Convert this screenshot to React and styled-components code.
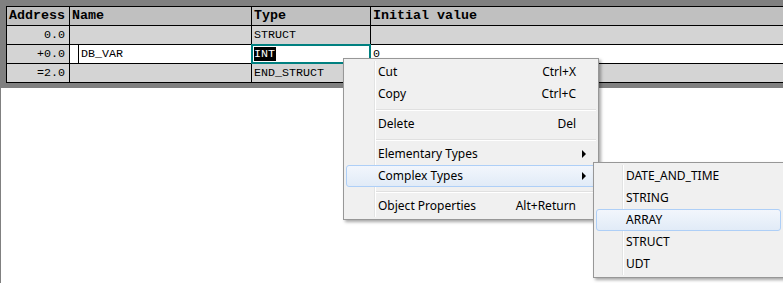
import React from 'react';
import styled, { createGlobalStyle } from 'styled-components';

const GlobalStyle = createGlobalStyle`
  html, body {
    margin: 0;
    padding: 0;
    background: #ffffff;
  }
`;

const Screen = styled.div`
  position: relative;
  width: 783px;
  height: 283px;
  overflow: hidden;
  background: #ffffff;
  border-left: 1px solid #808080;
  box-sizing: border-box;
`;

const TableArea = styled.div`
  background: #808080;
  padding: 6px 0 5px 5px;
`;

const Table = styled.div`
  display: grid;
  grid-template-columns: 62px 181px 118px 1fr;
  grid-auto-rows: 18px;
  gap: 1px;
  background: #000000;
  border: 1px solid #000000;
  border-right: none;
  font-family: 'Liberation Mono', monospace;
  font-size: 11.67px;
  color: #000000;
`;

const Cell = styled.div`
  position: relative;
  display: flex;
  align-items: center;
  padding: ${p => (p.$right ? '0 4px 0 0' : '0 0 0 2px')};
  justify-content: ${p => (p.$right ? 'flex-end' : 'flex-start')};
  background: ${p => p.$bg || '#d4d4d4'};
  white-space: nowrap;
  line-height: 18px;
`;

const HeadCell = styled(Cell)`
  background: #c0c0c0;
  font-weight: bold;
  font-size: 13.33px;
`;

const NameCell = styled(Cell)`
  padding: 0;
  background: #ffffff;
`;

const NameGap = styled.div`
  width: 8px;
  height: 100%;
  border-right: 1px solid #000000;
  margin-right: 2px;
`;

const EditCell = styled(Cell)`
  background: #ffffff;
  outline: 2px solid #008080;
  outline-offset: -1px;
  z-index: 1;
`;

const Selected = styled.span`
  background: #000000;
  color: #ffffff;
  padding-right: 1px;
  line-height: 14px;
`;

const Menu = styled.div`
  position: absolute;
  left: ${p => p.$x}px;
  top: ${p => p.$y}px;
  width: ${p => p.$w}px;
  box-sizing: border-box;
  padding: 2px;
  background: #f0f0f0;
  border: 1px solid #979797;
  box-shadow: 2px 2px 3px rgba(0, 0, 0, 0.35);
  font-family: 'Noto Sans', 'Liberation Sans', sans-serif;
  font-size: 12px;
  color: #000000;
  z-index: ${p => p.$z || 5};

  &::before {
    content: '';
    position: absolute;
    top: 2px;
    bottom: 2px;
    left: ${p => p.$gutter}px;
    width: 1px;
    background: #e2e3e3;
    box-shadow: 1px 0 0 #ffffff;
  }
`;

const Item = styled.div`
  position: relative;
  display: flex;
  align-items: center;
  height: 22px;
  box-sizing: border-box;
  padding: 0 ${p => p.$padRight || 19}px 0 ${p => p.$indent}px;
  border: 1px solid transparent;
  border-radius: 3px;
  line-height: 20px;
  ${p =>
    p.$active &&
    `
    border-color: #aecff7;
    background: linear-gradient(#f2f6fc, #e1ebf7);
  `}
`;

const Label = styled.span`
  flex: 1;
`;

const Shortcut = styled.span`
  text-align: right;
`;

const Arrow = styled.span`
  position: absolute;
  right: 9px;
  top: 6px;
  width: 0;
  height: 0;
  border-top: 4px solid transparent;
  border-bottom: 4px solid transparent;
  border-left: 4px solid #000000;
`;

const Separator = styled.div`
  height: 8px;
  margin-left: 29px;
  display: flex;
  align-items: center;

  &::after {
    content: '';
    flex: 1;
    height: 1px;
    background: #e0e0e0;
    box-shadow: 0 1px 0 #ffffff;
  }
`;

const mainItems = [
  { label: 'Cut', key: 'Ctrl+X' },
  { label: 'Copy', key: 'Ctrl+C' },
  { sep: true },
  { label: 'Delete', key: 'Del' },
  { sep: true },
  { label: 'Elementary Types', sub: true },
  { label: 'Complex Types', sub: true, active: true },
  { sep: true },
  { label: 'Object Properties', key: 'Alt+Return' },
];

const subItems = ['DATE_AND_TIME', 'STRING', 'ARRAY', 'STRUCT', 'UDT'];

export default function App() {
  return (
    <Screen>
      <GlobalStyle />
      <TableArea>
        <Table>
          <HeadCell>Address</HeadCell>
          <HeadCell>Name</HeadCell>
          <HeadCell>Type</HeadCell>
          <HeadCell>Initial value</HeadCell>

          <Cell $right>0.0</Cell>
          <Cell />
          <Cell>STRUCT</Cell>
          <Cell />

          <Cell $right>+0.0</Cell>
          <NameCell>
            <NameGap />
            DB_VAR
          </NameCell>
          <EditCell>
            <Selected>INT</Selected>
          </EditCell>
          <Cell $bg="#ffffff">0</Cell>

          <Cell $right>=2.0</Cell>
          <Cell />
          <Cell>END_STRUCT</Cell>
          <Cell />
        </Table>
      </TableArea>

      <Menu $x={342} $y={58} $w={256} $gutter={30}>
        {mainItems.map((it, i) =>
          it.sep ? (
            <Separator key={i} />
          ) : (
            <Item key={i} $indent={31} $active={it.active}>
              <Label>{it.label}</Label>
              {it.key && <Shortcut>{it.key}</Shortcut>}
              {it.sub && <Arrow />}
            </Item>
          )
        )}
      </Menu>

      <Menu $x={592} $y={162} $w={191} $gutter={28} $z={6}>
        {subItems.map(s => (
          <Item key={s} $indent={29} $active={s === 'ARRAY'} $padRight={8}>
            <Label>{s}</Label>
          </Item>
        ))}
      </Menu>
    </Screen>
  );
}
